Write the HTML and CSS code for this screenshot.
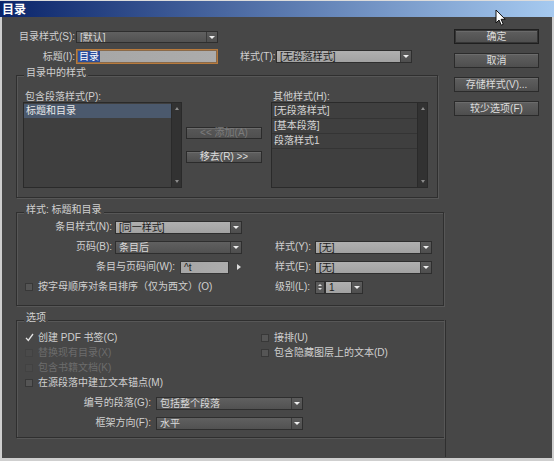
FILE: index.html
```html
<!DOCTYPE html>
<html lang="zh-CN">
<head>
<meta charset="utf-8">
<title>目录</title>
<link rel="stylesheet" href="styles.css">
</head>
<body>
<div class="window">
  <div class="titlebar">目录</div>
  <svg class="cursor" width="12" height="18" viewBox="0 0 12 18"><path d="M1 1 L1 14 L4 11 L6.3 16.2 L8.3 15.3 L6.1 10.3 L10.2 10.3 Z" fill="#fff" stroke="#111" stroke-width="1" stroke-linejoin="round"/></svg>
  <div class="body">
    <div class="main">
      <div class="row r1">
        <span class="lbl w60">目录样式(S):</span>
        <div class="select dark w142 h12"><span class="val">[默认]</span><span class="arrow"></span></div>
      </div>
      <div class="row r2">
        <span class="lbl w60">标题(I):</span>
        <div class="input focus w142"><span class="selected-text">目录</span></div>
        <span class="lbl t-lbl">样式(T):</span>
        <div class="select light w136"><span class="val">[无段落样式]</span><span class="arrow"></span></div>
      </div>

      <div class="group g1">
        <div class="group-title">目录中的样式</div>
        <div class="g1-content">
          <div class="col-list w159">
            <div class="list-label">包含段落样式(P):</div>
            <div class="listbox">
              <div class="items">
                <div class="item selected">标题和目录</div>
              </div>
              <div class="scrollbar"><span class="sb-up"></span><span class="sb-down"></span></div>
            </div>
          </div>
          <div class="col-btns">
            <div class="btn small disabled">&lt;&lt; 添加(A)</div>
            <div class="btn small">移去(R) &gt;&gt;</div>
          </div>
          <div class="col-list w157 ml9">
            <div class="list-label">其他样式(H):</div>
            <div class="listbox">
              <div class="items">
                <div class="item sep">[无段落样式]</div>
                <div class="item sep">[基本段落]</div>
                <div class="item sep">段落样式1</div>
              </div>
              <div class="scrollbar"><span class="sb-up"></span><span class="sb-down"></span></div>
            </div>
          </div>
        </div>
      </div>

      <div class="group g2">
        <div class="group-title">样式: 标题和目录</div>
        <div class="g2-rows">
          <div class="row h20">
            <div class="left-part">
              <span class="lbl w96">条目样式(N):</span>
              <div class="select light w127 ml2"><span class="val">[同一样式]</span><span class="arrow"></span></div>
            </div>
          </div>
          <div class="row h20">
            <div class="left-part">
              <span class="lbl w96">页码(B):</span>
              <div class="select dark w127 ml2"><span class="val">条目后</span><span class="arrow"></span></div>
            </div>
            <span class="lbl w36">样式(Y):</span>
            <div class="select light w117 ml4"><span class="val">[无]</span><span class="arrow"></span></div>
          </div>
          <div class="row h20">
            <div class="left-part">
              <span class="lbl w159">条目与页码间(W):</span>
              <div class="input plain w49 ml4"><span class="val">^t</span></div>
              <span class="tri-right"></span>
            </div>
            <span class="lbl w36">样式(E):</span>
            <div class="select light w117 ml4"><span class="val">[无]</span><span class="arrow"></span></div>
          </div>
          <div class="row h20">
            <div class="left-part">
              <span class="check"></span>
              <span class="check-text">按字母顺序对条目排序（仅为西文）(O)</span>
            </div>
            <span class="lbl w36">级别(L):</span>
            <div class="spinner ml4"><span class="sp-up"></span><span class="sp-down"></span></div>
            <div class="select light w38"><span class="val">1</span><span class="arrow"></span></div>
          </div>
        </div>
      </div>

      <div class="opts">
        <div class="group g3">
          <div class="group-title">选项</div>
          <div class="checks">
            <div class="ck-row"><span class="checkmark"><svg width="9" height="9" viewBox="0 0 9 9"><path d="M1 4.8 L3.3 7.5 L8 1" fill="none" stroke="#e4e4e4" stroke-width="1.3"/></svg></span><span class="check-text">创建 PDF 书签(C)</span></div>
            <div class="ck-row"><span class="check"></span><span class="check-text">接排(U)</span></div>
            <div class="ck-row disabled"><span class="check"></span><span class="check-text">替换现有目录(X)</span></div>
            <div class="ck-row"><span class="check"></span><span class="check-text">包含隐藏图层上的文本(D)</span></div>
            <div class="ck-row disabled"><span class="check"></span><span class="check-text">包含书籍文档(K)</span></div>
            <div class="ck-row"></div>
            <div class="ck-row"><span class="check"></span><span class="check-text">在源段落中建立文本锚点(M)</span></div>
            <div class="ck-row"></div>
          </div>
          <div class="g3-selects">
            <div class="row h20">
              <span class="lbl w135">编号的段落(G):</span>
              <div class="select dark w147 ml4"><span class="val">包括整个段落</span><span class="arrow"></span></div>
            </div>
            <div class="row h20">
              <span class="lbl w135">框架方向(F):</span>
              <div class="select dark w147 ml4"><span class="val">水平</span><span class="arrow"></span></div>
            </div>
          </div>
        </div>
      </div>
    </div>

    <div class="side">
      <div class="btn big default">确定</div>
      <div class="btn big">取消</div>
      <div class="btn big">存储样式(V)...</div>
      <div class="btn big">较少选项(F)</div>
    </div>
  </div>
</div>
</body>
</html>
```

FILE: styles.css
```css
html, body {
  margin: 0;
  padding: 0;
  background: #474747;
}
body {
  font-family: "Liberation Sans", "Noto Sans CJK SC", sans-serif;
  font-size: 10px;
  color: #d0d0d0;
}
.window {
  position: relative;
  width: 554px;
  height: 461px;
  display: flex;
  flex-direction: column;
  background: #474747;
  overflow: hidden;
}
.titlebar {
  height: 17px;
  box-sizing: border-box;
  border-top: 1px solid #dcdcdc;
  background: linear-gradient(to right, #0a246a 0%, #a6caf0 100%);
  color: #ffffff;
  font-weight: bold;
  font-size: 12px;
  line-height: 15px;
  padding-left: 2px;
  font-family: "Noto Sans CJK SC", sans-serif;
}
.cursor {
  position: absolute;
  left: 495px;
  top: 9px;
}
.body {
  flex: 1;
  display: flex;
  border-left: 2px solid #cfcfcf;
  border-right: 2px solid #cfcfcf;
  border-bottom: 3px solid #cfcfcf;
}
.main {
  width: 446px;
  padding-left: 14px;
  box-sizing: border-box;
  flex: none;
}
.side {
  width: 85px;
  margin-left: 6px;
  padding-top: 12px;
  display: flex;
  flex-direction: column;
  gap: 9px;
}

/* rows */
.row {
  display: flex;
  align-items: center;
}
.r1 { margin-top: 14px; height: 12px; }
.r2 { margin-top: 6px; height: 15px; }
.h20 { height: 20px; }
.lbl {
  flex: none;
  text-align: right;
  white-space: nowrap;
  box-sizing: border-box;
  padding-right: 1px;
  line-height: 12px;
}
.w60 { width: 60px; }
.w96 { width: 96px; }
.w36 { width: 36px; }
.w135 { width: 135px; }
.w159 { width: 159px; }
.t-lbl { width: 36px; margin-left: 22px; }
.ml2 { margin-left: 2px; }
.ml4 { margin-left: 4px; }
.ml9 { margin-left: 9px; }

/* selects */
.select {
  flex: none;
  display: flex;
  box-sizing: border-box;
  height: 13px;
  border: 1px solid #2e2e2e;
}
.select.h12 { height: 12px; }
.select .val {
  flex: 1;
  padding-left: 3px;
  line-height: 11px;
  white-space: nowrap;
  overflow: hidden;
}
.select .arrow {
  flex: none;
  width: 10px;
  border-left: 1px solid #3a3a3a;
  background: linear-gradient(#5c5c5c, #4e4e4e);
  display: flex;
  align-items: center;
  justify-content: center;
}
.select .arrow::before {
  content: "";
  border-left: 3px solid transparent;
  border-right: 3px solid transparent;
  border-top: 3px solid #eeeeee;
}
.dark {
  background: linear-gradient(#606060, #515151);
  color: #dadada;
}
.light {
  background: linear-gradient(#b0b0b0, #a2a2a2);
  color: #1d1d1d;
}
.w142 { width: 142px; }
.w136 { width: 136px; }
.w127 { width: 127px; }
.w117 { width: 117px; }
.w147 { width: 147px; }
.w38 { width: 38px; }
.w49 { width: 49px; }
.w157 { width: 157px; }

/* inputs */
.input {
  flex: none;
  box-sizing: border-box;
  display: flex;
  align-items: center;
  background: linear-gradient(to right, #a6a6a6, #acacac);
  color: #1d1d1d;
}
.input.focus {
  height: 15px;
  border: 1px solid #b87a3c;
  box-shadow: inset 0 0 0 1px #8a6a4a;
  padding-left: 1px;
}
.input.plain {
  height: 13px;
  border: 1px solid #353535;
  padding-left: 3px;
  line-height: 11px;
}
.selected-text {
  background: #2a4d9c;
  color: #ffffff;
  line-height: 11px;
  padding: 0 1px;
}
.tri-right {
  flex: none;
  margin-left: 8px;
  width: 0;
  height: 0;
  border-top: 3px solid transparent;
  border-bottom: 3px solid transparent;
  border-left: 4px solid #dddddd;
}
.spinner {
  flex: none;
  width: 10px;
  height: 13px;
  box-sizing: border-box;
  border: 1px solid #2e2e2e;
  background: #5a5a5a;
  display: flex;
  flex-direction: column;
  align-items: center;
  justify-content: space-evenly;
}
.sp-up, .sp-down {
  width: 0;
  height: 0;
  border-left: 2px solid transparent;
  border-right: 2px solid transparent;
}
.sp-up { border-bottom: 2px solid #e0e0e0; }
.sp-down { border-top: 2px solid #e0e0e0; }

/* groups */
.group {
  box-sizing: border-box;
  border: 1px solid #2f2f2f;
  box-shadow: 1px 1px 0 #575757, inset 1px 1px 0 #575757;
}
.group-title {
  width: max-content;
  margin-top: -9px;
  margin-left: 7px;
  padding: 0 2px;
  line-height: 12px;
  height: 12px;
  background: #474747;
}
.g1 {
  margin-top: 11px;
  width: 422px;
  height: 123px;
}
.g1-content {
  display: flex;
  margin-top: 12px;
  padding-left: 6px;
}
.col-list { flex: none; }
.list-label {
  height: 11px;
  line-height: 11px;
  padding-left: 2px;
  white-space: nowrap;
}
.listbox {
  display: flex;
  height: 86px;
  box-sizing: border-box;
  border: 1px solid #2a2a2a;
  background: #3f3f3f;
}
.items {
  flex: 1;
  padding-top: 1px;
}
.item {
  height: 14px;
  line-height: 14px;
  padding-left: 2px;
  white-space: nowrap;
  color: #d6d6d6;
}
.item.selected {
  background: #4b596d;
  color: #e8e8e8;
}
.item.sep {
  border-bottom: 1px solid #343434;
}
.scrollbar {
  flex: none;
  width: 10px;
  background: #323232;
  border-left: 1px solid #2a2a2a;
  display: flex;
  flex-direction: column;
  justify-content: space-between;
  align-items: center;
  padding: 4px 0;
  box-sizing: border-box;
}
.sb-up, .sb-down {
  width: 0;
  height: 0;
  border-left: 2px solid transparent;
  border-right: 2px solid transparent;
}
.sb-up { border-bottom: 3px solid #8c8c8c; }
.sb-down { border-top: 3px solid #8c8c8c; }
.col-btns {
  flex: none;
  width: 76px;
  margin-left: 4px;
  padding-top: 36px;
  display: flex;
  flex-direction: column;
  gap: 12px;
}

/* buttons */
.btn {
  box-sizing: border-box;
  text-align: center;
  border: 1px solid #2b2b2b;
  background: linear-gradient(#606060, #4e4e4e);
  box-shadow: inset 0 1px 0 #6c6c6c;
  color: #dcdcdc;
  white-space: nowrap;
}
.btn.small {
  height: 12px;
  line-height: 10px;
}
.btn.big {
  height: 15px;
  line-height: 13px;
}
.btn.default {
  border: 1px solid #1f1f1f;
  box-shadow: inset 0 0 0 1px #353535, inset 0 2px 0 #6a6a6a;
}
.btn.disabled {
  color: #7c7c7c;
  background: linear-gradient(#585858, #4f4f4f);
}

.g2 {
  margin-top: 14px;
  width: 428px;
  height: 94px;
}
.g2-rows { margin-top: 1px; }
.left-part {
  flex: none;
  width: 258px;
  display: flex;
  align-items: center;
}
.check {
  flex: none;
  width: 8px;
  height: 8px;
  box-sizing: border-box;
  border: 1px solid #383838;
  background: #555555;
  margin-left: 8px;
}
.check-text {
  margin-left: 5px;
  white-space: nowrap;
  line-height: 12px;
}

.opts {
  margin-top: 14px;
  width: 429px;
  border-right: 1px solid #2f2f2f;
  padding-bottom: 19px;
}
.g3 {
  width: 428px;
  height: 118px;
  border-right: none;
}
.checks {
  margin-top: 6px;
  display: grid;
  grid-template-columns: 236px auto;
  grid-auto-rows: 15px;
}
.ck-row {
  display: flex;
  align-items: center;
}
.ck-row.disabled .check {
  background: #4a4a4a;
  border-color: #424242;
}
.ck-row.disabled .check-text {
  color: #6c6c6c;
}
.checkmark {
  flex: none;
  width: 9px;
  height: 9px;
  margin-left: 8px;
  display: flex;
}
.checkmark + .check-text { margin-left: 4px; }
.g3-selects { margin-top: 3px; }
```
